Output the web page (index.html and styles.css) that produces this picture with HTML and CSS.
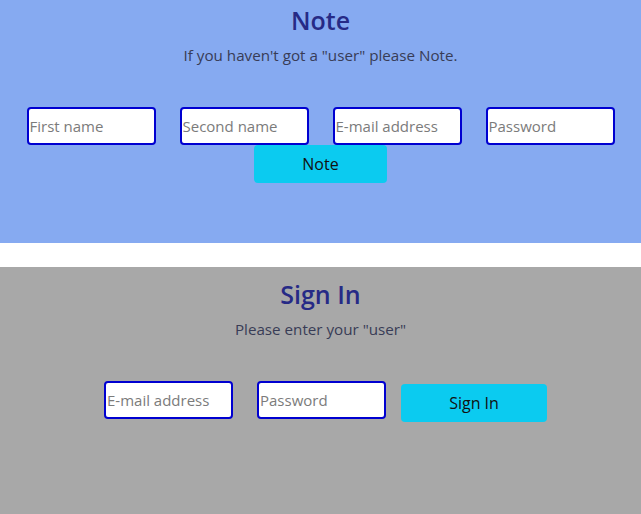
FILE: index.html
```html
<!DOCTYPE html>
<html lang="en">
<head>
<meta charset="utf-8">
<title>Note / Sign In</title>
<link rel="stylesheet" href="styles.css">
</head>
<body>
<section class="panel panel-note">
  <h1 class="title">Note</h1>
  <p class="lead">If you haven't got a "user" please Note.</p>
  <form class="form form-note">
    <div class="fields">
      <input class="field" type="text" placeholder="First name">
      <input class="field" type="text" placeholder="Second name">
      <input class="field" type="email" placeholder="E-mail address">
      <input class="field" type="password" placeholder="Password">
    </div>
    <button class="btn btn-note" type="button">Note</button>
  </form>
</section>
<div class="spacer"></div>
<section class="panel panel-signin">
  <h1 class="title">Sign In</h1>
  <p class="lead">Please enter your "user"</p>
  <form class="form form-signin">
    <input class="field" type="email" placeholder="E-mail address">
    <input class="field" type="password" placeholder="Password">
    <button class="btn btn-signin" type="button">Sign In</button>
  </form>
</section>
</body>
</html>
```
FILE: styles.css
```css
* { box-sizing: border-box; }
body {
  margin: 0;
  font-family: "Open Sans", "Noto Sans", sans-serif;
  background: #ffffff;
}
.panel {
  display: flex;
  flex-direction: column;
  align-items: center;
  text-align: center;
}
.panel-note {
  background: #86aaf1;
  height: 243px;
  padding-top: 4px;
}
.spacer { height: 24px; }
.panel-signin {
  background: #a8a8a8;
  height: 247px;
  padding-top: 11px;
}
.title {
  margin: 0;
  font-size: 25px;
  font-weight: 600;
  color: #262a86;
  line-height: 32px;
}
.lead {
  margin: 8px 0 0;
  font-size: 15.2px;
  line-height: 22px;
  color: #383c56;
}
.form-note {
  margin-top: 41px;
  display: flex;
  flex-direction: column;
  align-items: center;
}
.fields {
  display: flex;
  gap: 24px;
}
.field {
  width: 129px;
  height: 38px;
  border: 2px solid #0000d0;
  border-radius: 4px;
  background: #fff;
  padding: 0 1px;
  font-family: inherit;
  font-size: 15px;
  color: #333;
  outline: none;
}
.field::placeholder { color: #7b7b7b; }
.btn {
  height: 38px;
  border: none;
  border-radius: 4px;
  background: #0bcbf0;
  color: #111;
  font-family: inherit;
  font-size: 16px;
  cursor: pointer;
}
.btn-note { width: 133px; }
.form-signin {
  margin-top: 41px;
  display: flex;
  align-items: flex-start;
  padding-left: 10px;
}
.form-signin .field + .field { margin-left: 24px; }
.btn-signin {
  width: 146px;
  margin-left: 15px;
  margin-top: 3px;
}
```
